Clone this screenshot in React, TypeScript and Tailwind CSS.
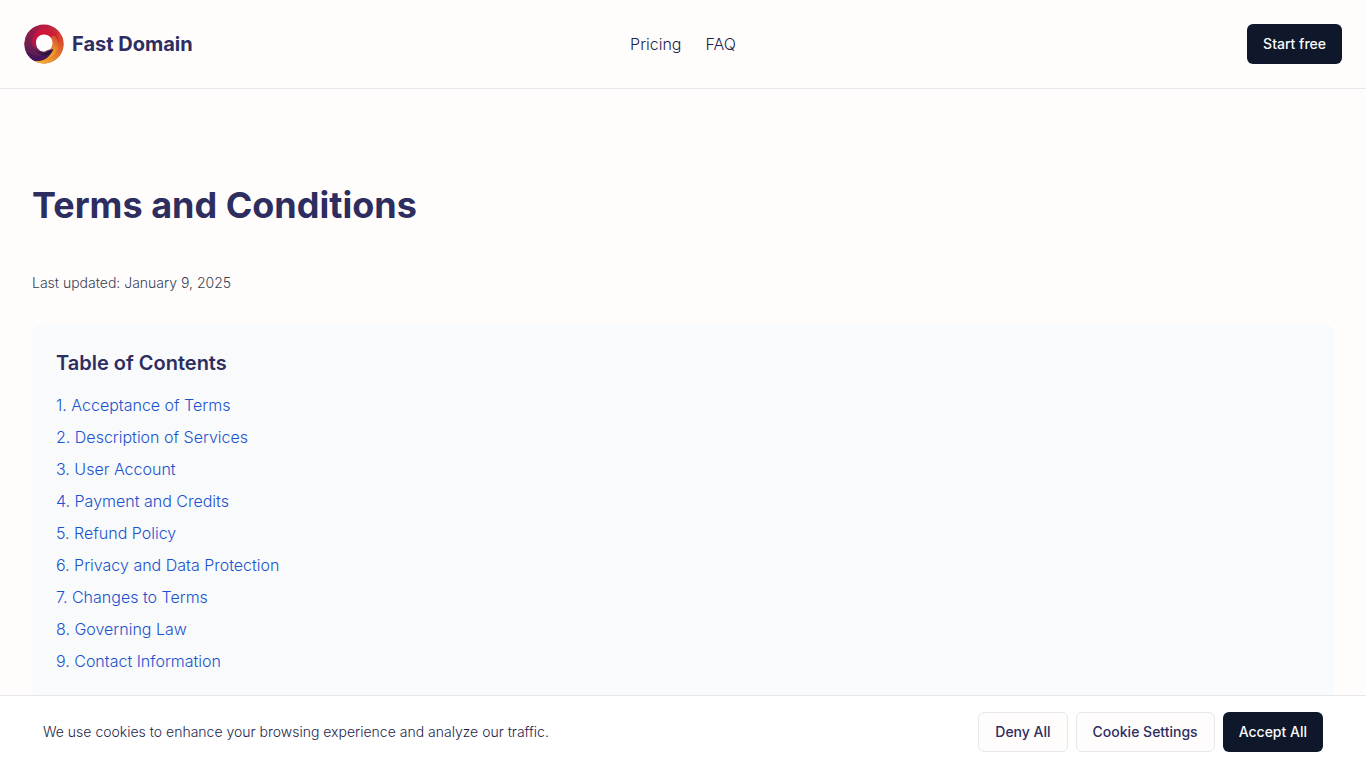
const sections = [
  'Acceptance of Terms',
  'Description of Services',
  'User Account',
  'Payment and Credits',
  'Refund Policy',
  'Privacy and Data Protection',
  'Changes to Terms',
  'Governing Law',
  'Contact Information',
];

function Logo() {
  return (
    <svg viewBox="0 0 40 40" className="size-10" aria-hidden="true">
      <defs>
        <linearGradient id="ring-top" x1="0" y1="0.2" x2="1" y2="0.6">
          <stop offset="0" stopColor="#9c1c50" />
          <stop offset="0.4" stopColor="#b91c40" />
          <stop offset="1" stopColor="#d9402f" />
        </linearGradient>
        <linearGradient id="ring-left" x1="0.6" y1="0" x2="0.4" y2="1">
          <stop offset="0" stopColor="#a81b44" />
          <stop offset="0.5" stopColor="#7a1f4d" />
          <stop offset="1" stopColor="#4b1c58" />
        </linearGradient>
        <linearGradient id="ring-right" x1="0.9" y1="0" x2="0.3" y2="1">
          <stop offset="0" stopColor="#d43a30" />
          <stop offset="0.5" stopColor="#e2702a" />
          <stop offset="1" stopColor="#f4ac2c" />
        </linearGradient>
        <linearGradient id="ring-glow" x1="0.8" y1="0" x2="0.3" y2="1">
          <stop offset="0" stopColor="#d8452e" />
          <stop offset="0.5" stopColor="#e88a2a" />
          <stop offset="1" stopColor="#f3ad2e" />
        </linearGradient>
        <linearGradient id="ring-inner" x1="0" y1="0.8" x2="1" y2="0.2">
          <stop offset="0" stopColor="#a5174a" />
          <stop offset="0.5" stopColor="#d0143a" />
          <stop offset="1" stopColor="#cb2136" />
        </linearGradient>
        <linearGradient id="ring-shade" x1="0" y1="0" x2="1" y2="0.3">
          <stop offset="0" stopColor="#5a1c5c" />
          <stop offset="1" stopColor="#1a1233" />
        </linearGradient>
      </defs>
      <circle cx="20" cy="20" r="19.5" fill="url(#ring-top)" />
      <path d="M38 12.500A19.500 19.500 0 0 1 11 37.300L22 30L28 14C31 9 35 9 38 12.500Z" fill="url(#ring-right)" />
      <path d="M12 2.200A19.500 19.500 0 0 0 10 36.800C17 38 25 33 28 26L20 19C8 18 8 9 16 4Z" fill="url(#ring-left)" />
      <path d="M8 20C6 9 17 2 27 6C34 9 36 16 33.500 22L28 18L26 12L14 12L12 25C10 24 8.500 22 8 20Z" fill="url(#ring-inner)" />
      <path d="M27 14C30 19 30 27 22 34C32 33 37 23 33 14C31 11 28 11 27 14Z" fill="url(#ring-glow)" />
      <path d="M3 27C8 34 20 33 29 25.500C26 35 16 39 8.500 35.800C5.500 33.500 3.700 30 3 27Z" fill="#481658" />
      <path d="M9 24C14 30 22 30 29.500 25C26 33 16 34 9 24Z" fill="url(#ring-shade)" />
      <path d="M12 18.500C12 13.500 15.500 10.400 20.200 10.400C25.200 10.400 28.500 14 28.500 18.800C28.500 22 27.500 24.200 26 25.500C22.500 26 21.500 28 19 27.600C15 27 12 23.500 12 18.500Z" fill="#fffdfc" />
    </svg>
  );
}

const button = 'h-10 cursor-pointer rounded-md px-4 text-sm font-medium whitespace-nowrap';

export default function App() {
  return (
    <div className="min-h-screen bg-[#fffdfc] font-['Inter','Liberation_Sans',sans-serif] text-[#2d2d5f]">
      <header className="grid grid-cols-[1fr_auto_1fr] items-center border-b border-gray-200 p-6">
        <a href="#home" className="flex items-center gap-2 text-xl font-bold">
          <Logo />
          <span>Fast Domain</span>
        </a>
        <nav className="flex gap-6 text-base font-light text-[#1f1f4d]">
          <a href="#pricing">Pricing</a>
          <a href="#faq">FAQ</a>
        </nav>
        <button type="button" className={`${button} justify-self-end bg-[#0f172a] text-slate-50`}>
          Start free
        </button>
      </header>

      <main className="px-8 py-24">
        <h1 className="mb-12 text-4xl font-bold">Terms and Conditions</h1>
        <p className="mb-8 text-sm font-light text-gray-700">Last updated: January 9, 2025</p>
        <nav aria-labelledby="toc" className="rounded-lg bg-[#f9fafb] p-6">
          <h2 id="toc" className="mb-4 text-xl font-semibold">Table of Contents</h2>
          <ul className="space-y-2 font-light text-[#1a53cf]">
            {sections.map((name, i) => (
              <li key={name}>
                <a href={`#section-${i + 1}`}>{i + 1}. {name}</a>
              </li>
            ))}
          </ul>
        </nav>
      </main>

      <aside aria-label="Cookie consent" className="fixed inset-x-0 bottom-0 border-t border-gray-200 bg-white py-4">
        <div className="mx-auto flex max-w-7xl items-center justify-between gap-4">
          <p className="text-sm font-light text-[#1f1f4d]">We use cookies to enhance your browsing experience and analyze our traffic.</p>
          <div className="flex gap-2">
            <button type="button" className={`${button} border border-gray-200 bg-[#fffdfc]`}>Deny All</button>
            <button type="button" className={`${button} border border-gray-200 bg-[#fffdfc]`}>Cookie Settings</button>
            <button type="button" className={`${button} bg-[#0f172a] text-slate-50`}>Accept All</button>
          </div>
        </div>
      </aside>
    </div>
  );
}
